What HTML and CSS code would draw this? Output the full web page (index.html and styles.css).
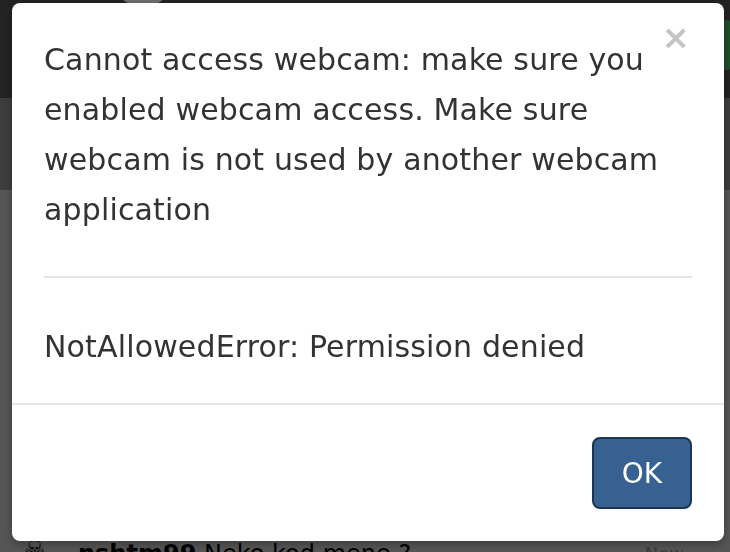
FILE: index.html
```html
<!DOCTYPE html>
<html lang="en">
<head>
  <meta charset="UTF-8">
  <title>Webcam</title>
  <link rel="stylesheet" href="styles.css">
</head>
<body>
  <div class="page">
    <div class="topbar">
      <span class="avatar"></span>
      <span class="online"></span>
    </div>
    <div class="toolbar"></div>
    <div class="chat">
      <div class="msg">
        <span class="icon">&#9760;</span>
        <b>nshtm99</b> Neko kod mene ?
        <span class="time">Now</span>
      </div>
    </div>
  </div>

  <div class="backdrop"></div>

  <div class="modal">
    <button class="close">&times;</button>
    <div class="modal-body">
      <p>Cannot access webcam: make sure you enabled webcam access. Make sure webcam is not used by another webcam application</p>
      <hr>
      <p>NotAllowedError: Permission denied</p>
    </div>
    <div class="modal-footer">
      <button class="btn-ok">OK</button>
    </div>
  </div>
</body>
</html>
```

FILE: styles.css
```css
body {
  margin: 0;
  font-family: "DejaVu Sans", sans-serif;
  background: #aaa;
  overflow: hidden;
}
.page {
  height: 552px;
  display: flex;
  flex-direction: column;
}
.topbar {
  height: 98px;
  background: #464646;
  position: relative;
}
.avatar {
  position: absolute;
  left: 120px;
  top: -20px;
  width: 46px;
  height: 26px;
  border-radius: 50%;
  background: #ddd;
}
.online {
  position: absolute;
  right: -10px;
  top: 20px;
  width: 26px;
  height: 50px;
  border-radius: 50%;
  background: #3d9a5a;
}
.toolbar {
  height: 92px;
  background: #7a7a7a;
}
.chat {
  flex: 1;
  background: #aaa;
  display: flex;
  flex-direction: column;
  justify-content: flex-end;
}
.msg {
  position: relative;
  height: 8px;
  padding-left: 78px;
  font-size: 24px;
  line-height: 20px;
  color: #000;
}
.msg .icon {
  position: absolute;
  left: 24px;
  top: -4px;
  font-size: 24px;
}
.msg .time {
  position: absolute;
  right: 46px;
  top: 0;
  font-size: 18px;
  color: #777;
}
.backdrop {
  position: fixed;
  inset: 0;
  background: rgba(0,0,0,0.5);
}
.modal {
  position: fixed;
  left: 12px;
  top: 3px;
  width: 712px;
  background: #fff;
  border-radius: 8px;
  box-shadow: 0 3px 9px rgba(0,0,0,0.3);
  color: #333;
}
.close {
  position: absolute;
  right: 34px;
  top: 16px;
  border: none;
  background: none;
  padding: 0;
  font-family: "DejaVu Sans", sans-serif;
  font-size: 34px;
  font-weight: bold;
  line-height: 36px;
  color: #c4c4c4;
  cursor: pointer;
}
.modal-body {
  padding: 32px 32px 31px;
  font-size: 30px;
  letter-spacing: 0.15px;
  line-height: 50px;
}
.modal-body p {
  margin: 0;
}
.modal-body hr {
  margin: 41px 0 44px;
  border: none;
  border-top: 2px solid #e5e5e5;
}
.modal-footer {
  border-top: 2px solid #e5e5e5;
  padding: 32px;
  display: flex;
  justify-content: flex-end;
}
.btn-ok {
  width: 100px;
  height: 72px;
  background: #366190;
  border: 2px solid #1d3650;
  border-radius: 8px;
  color: #fff;
  font-family: "DejaVu Sans", sans-serif;
  font-size: 28px;
  cursor: pointer;
}
```
